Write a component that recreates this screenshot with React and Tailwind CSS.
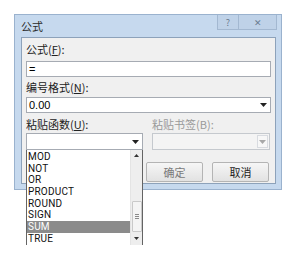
import React from 'react';

const cjk = { fontFamily: '"Noto Sans CJK SC", "Liberation Sans", sans-serif' };

const Arrow = ({ color = '#222' }) => (
  <svg width="7" height="4" viewBox="0 0 7 4">
    <path d="M0 0 H7 L3.5 4 Z" fill={color} />
  </svg>
);

const items = ['MOD', 'NOT', 'OR', 'PRODUCT', 'ROUND', 'SIGN', 'SUM', 'TRUE'];

export default function App() {
  return (
    <div className="relative w-[292px] h-[256px] bg-white overflow-hidden" style={cjk}>
      {/* 대화상자 */}
      <div className="absolute left-[14px] top-[14px] w-[268px] h-[176px] bg-[#c6d9ee] border border-[#9ab2ce] flex flex-col">
        {/* 제목 표시줄 */}
        <div className="h-[22px] flex items-start justify-between">
          <span className="pl-[6px] pt-[5px] text-[11px] leading-[12px] text-[#2a2a2a]">公式</span>
          <div className="flex mr-[4px]">
            <div className="w-[22px] h-[15px] border border-t-0 border-[#a3b8d1] bg-[#bfd2e8] flex items-center justify-center text-[9px] leading-none text-[#6b7c90]">?</div>
            <div className="w-[38px] h-[15px] border border-t-0 border-l-0 border-[#a3b8d1] bg-[#bfd2e8] flex items-center justify-center text-[9px] leading-none text-[#6b7c90]">✕</div>
          </div>
        </div>
        {/* 본문 */}
        <div className="ml-[6px] mr-[5px] h-[147px] bg-[#f0f0f0] border border-[#8da2ba] px-[4px] pt-[5px]">
          <div className="text-[11px] leading-[12px] text-[#222]">
            公式(<span className="underline">F</span>):
          </div>
          <div className="mt-[6px] h-[16px] w-[245px] bg-white border border-[#a6abb3] text-[11px] leading-[14px] pl-[2px] text-black" style={{ fontFamily: '"Liberation Sans", sans-serif' }}>
            =
          </div>
          <div className="mt-[4px] text-[11px] leading-[12px] text-[#222]">
            编号格式(<span className="underline">N</span>):
          </div>
          <div className="mt-[4px] h-[16px] w-[245px] bg-white border border-[#a6abb3] flex items-center justify-between text-[11px] pl-[2px] pr-[3px]" style={{ fontFamily: '"Liberation Sans", sans-serif' }}>
            <span>0.00</span>
            <Arrow />
          </div>
          <div className="mt-[5px] flex text-[11px] leading-[12px]">
            <div className="w-[126px] text-[#222]">
              粘贴函数(<span className="underline">U</span>):
            </div>
            <div className="text-[#9a9a9a]">粘贴书签(B):</div>
          </div>
          <div className="mt-[3px] flex gap-[9px]">
            <div className="w-[117px] h-[17px] bg-white border border-[#a6abb3] flex items-center justify-end pr-[3px]">
              <Arrow />
            </div>
            <div className="w-[118px] h-[17px] bg-[#f4f4f4] border border-[#c5c9ce] flex items-center justify-end pr-[1px]">
              <div className="w-[11px] h-[13px] border border-[#d8dbe0] bg-[#f7f7f7] flex items-center justify-center">
                <Arrow color="#a8a8a8" />
              </div>
            </div>
          </div>
          <div className="mt-[12px] flex gap-[9px] pl-[120px]">
            <div className="w-[57px] h-[20px] border border-[#b4b4b4] rounded-[2px] bg-gradient-to-b from-[#f6f6f6] to-[#e2e2e2] flex items-center justify-center text-[11px] text-[#7a7a7a]">
              确定
            </div>
            <div className="w-[57px] h-[20px] border border-[#b4b4b4] rounded-[2px] bg-gradient-to-b from-[#f6f6f6] to-[#e2e2e2] flex items-center justify-center text-[11px] text-[#222]">
              取消
            </div>
          </div>
        </div>
      </div>

      {/* 드롭다운 목록 */}
      <div className="absolute left-[26px] top-[150px] w-[117px] h-[95px] bg-white border-l border-r border-[#646464] flex" style={{ fontFamily: 'Roboto, "Liberation Sans", sans-serif' }}>
        <div className="flex-1 pt-[1px]">
          {items.map((it) => (
            <div
              key={it}
              className={
                it === 'SUM'
                  ? 'h-[11.7px] leading-[11.7px] text-[10px] tracking-[0.2px] pl-[1px] bg-[#8b8b8b] text-white'
                  : 'h-[11.7px] leading-[11.7px] text-[10px] tracking-[0.2px] pl-[1px] text-[#111]'
              }
            >
              {it}
            </div>
          ))}
        </div>
        <div className="w-[12px] bg-[#eeeeee] flex flex-col items-center border-l border-[#e4e4e4]">
          <div className="h-[10px] flex items-center justify-center">
            <svg width="5" height="3" viewBox="0 0 5 3"><path d="M0 3 H5 L2.5 0 Z" fill="#333" /></svg>
          </div>
          <div className="h-[41px]" />
          <div className="w-[10px] h-[31px] bg-[#f4f4f4] border border-[#c9c9c9] rounded-[1px] flex flex-col items-center justify-center gap-[1px]">
            <div className="w-[4px] h-px bg-[#8a8a8a]" />
            <div className="w-[4px] h-px bg-[#8a8a8a]" />
            <div className="w-[4px] h-px bg-[#8a8a8a]" />
          </div>
          <div className="flex-1 flex items-center justify-center">
            <svg width="5" height="3" viewBox="0 0 5 3"><path d="M0 0 H5 L2.5 3 Z" fill="#333" /></svg>
          </div>
        </div>
      </div>
    </div>
  );
}
